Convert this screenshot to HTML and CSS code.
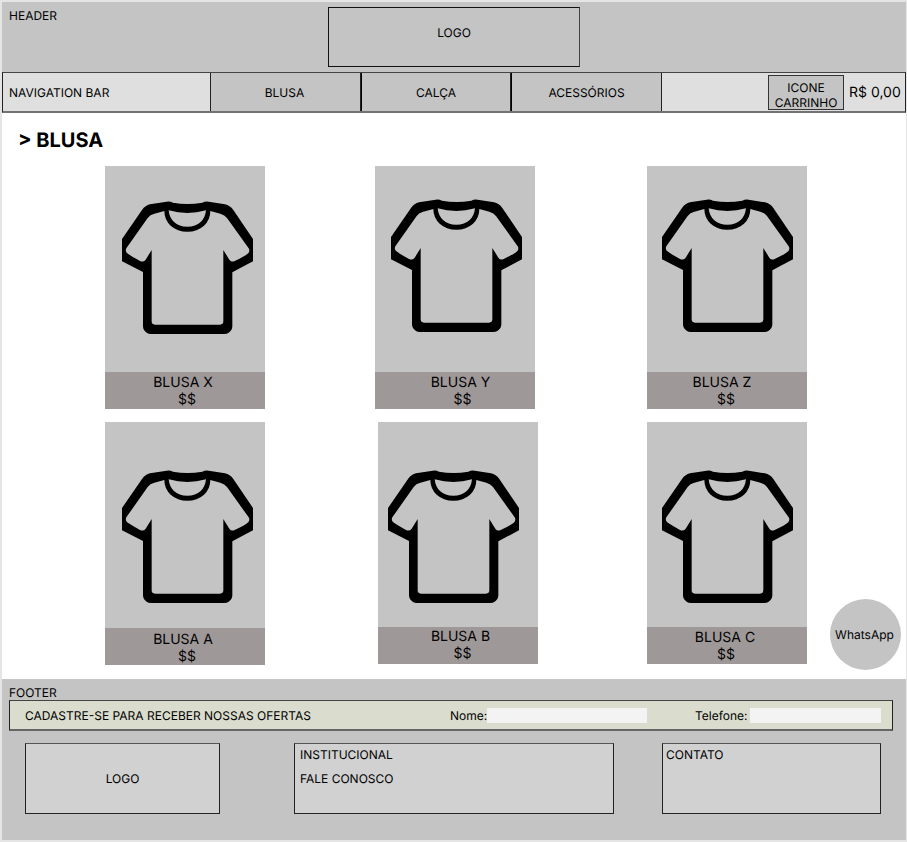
FILE: index.html
```html
<!DOCTYPE html>
<html lang="pt-BR">
<head>
<meta charset="utf-8">
<title>Blusa</title>
<link rel="stylesheet" href="styles.css">
</head>
<body>
<svg class="defs" width="0" height="0">
  <symbol id="shirt" viewBox="66 124 393 400">
    <path fill-rule="evenodd" d="M66 238L126 151Q136 137 150 134L200 126Q210 124 219 129Q262 137 307 129Q316 124 326 126L375 134Q390 137 400 151L459 238V305L397 338V500Q397 512 385 520Q381 523 372 523H153Q145 523 141 520Q129 512 129 500V337L66 305Z
    M193 154L163 162Q150 165 143 175L79 266Q76 272 79 278Q82 283 120 304Q130 309 137 300L155 271V485Q155 495 165 495H360Q370 495 370 485V271L388 300Q394 309 404 304Q440 287 446 279Q450 272 446 266L381 175Q374 166 361 162L331 154Q331 180 312 198Q292 216 262 216Q232 216 212 198Q193 180 193 154Z"/>
    <path class="neck" d="M206 152Q208 174 222 187Q237 201 262 201Q287 201 302 187Q316 174 318 152Q262 168 206 152Z"/>
  </symbol>
</svg>
<div class="page">
  <header class="header">
    <span class="header-label">HEADER</span>
    <div class="logo">LOGO</div>
  </header>
  <nav class="nav">
    <span class="nav-label">NAVIGATION BAR</span>
    <a class="tab">BLUSA</a>
    <a class="tab">CALÇA</a>
    <a class="tab">ACESSÓRIOS</a>
    <div class="cart"><span class="cart-icon">ICONE<br>CARRINHO</span><span class="price">R$ 0,00</span></div>
  </nav>
  <main class="main">
    <h1>&gt; BLUSA</h1>
    <div class="products">
      <article class="card x"><div class="photo"><svg><use href="#shirt"/></svg></div><div class="caption"><p>BLUSA X</p><p class="cost">$$</p></div></article>
      <article class="card y"><div class="photo"><svg><use href="#shirt"/></svg></div><div class="caption"><p>BLUSA Y</p><p class="cost">$$</p></div></article>
      <article class="card z"><div class="photo"><svg><use href="#shirt"/></svg></div><div class="caption"><p>BLUSA Z</p><p class="cost">$$</p></div></article>
      <article class="card a"><div class="photo"><svg><use href="#shirt"/></svg></div><div class="caption"><p>BLUSA A</p><p class="cost">$$</p></div></article>
      <article class="card b"><div class="photo"><svg><use href="#shirt"/></svg></div><div class="caption"><p>BLUSA B</p><p class="cost">$$</p></div></article>
      <article class="card c"><div class="photo"><svg><use href="#shirt"/></svg></div><div class="caption"><p>BLUSA C</p><p class="cost">$$</p></div></article>
    </div>
    <a class="whatsapp">WhatsApp</a>
  </main>
  <footer class="footer">
    <span class="footer-label">FOOTER</span>
    <form class="signup">
      <span class="offer">CADASTRE-SE PARA RECEBER NOSSAS OFERTAS</span>
      <label class="name">Nome:</label><span class="field field-name"></span>
      <label class="phone">Telefone:</label><span class="field field-phone"></span>
    </form>
    <div class="boxes">
      <div class="box box-logo">LOGO</div>
      <div class="box box-inst"><p>INSTITUCIONAL</p><p>FALE CONOSCO</p></div>
      <div class="box box-contact"><p>CONTATO</p></div>
    </div>
  </footer>
</div>
</body>
</html>
```
FILE: styles.css
```css
* { box-sizing: border-box; }
body { margin: 0; background: #e5e5e5; color: #000; font: 12px/15px Inter, sans-serif; text-rendering: geometricPrecision; }
p, h1 { margin: 0; }
.defs { display: block; height: 0; }
.neck { fill: #c4c4c4; }
.page { margin: 2px 1px 2px 2px; height: 838px; background: #fff; display: flex; flex-direction: column; }
.header { height: 70px; background: #c4c4c4; display: flex; align-items: flex-start; padding: 5px 0 0 7px; }
.header-label { width: 319px; margin-top: 1px; }
.logo { width: 252px; height: 60px; border: 1px solid #111; border-right-color: #444; text-align: center; padding-top: 17px; }
.nav { height: 41px; display: flex; background: #dfdfdf; border: 1px solid #222; border-top-color: #444; border-bottom: 2px solid #727272; line-height: 38px; }
.nav-label { width: 207px; padding-left: 6px; padding-top: 1px; }
.tab { width: 151px; padding: 1px 2px 0 0; background: #c4c4c4; border-left: 1px solid #222; border-right: 1px solid #222; text-align: center; }
.tab + .tab { border-left-color: #000; width: 150px; padding-right: 0; }
.tab:nth-of-type(3) { width: 151px; }
.cart { flex: 1; display: flex; padding-top: 2px; }
.cart-icon { width: 76px; height: 35px; margin-left: 106px; padding-top: 4px; background: #c4c4c4; border: 1px solid #333; line-height: 15px; text-align: center; white-space: nowrap; }
.price { margin-left: 5px; font-size: 14px; line-height: 35px; white-space: nowrap; }
.main { height: 566px; position: relative; padding-top: 15px; }
h1 { font-size: 20px; line-height: 24px; font-weight: 700; padding-left: 16px; }
.products { display: grid; grid-template-columns: 269.5px 272.5px 160px; grid-template-rows: 243px 243px; row-gap: 13px; margin: 14px 0 0 103px; }
.card { width: 160px; height: 243px; background: #c4c4c4; display: flex; flex-direction: column; }
.photo { flex: 1; padding: 35.4px 0 0 17px; }
.photo svg { display: block; width: 131px; height: 133.33px; }
.caption { height: 37px; background: #9f9898; font-size: 14px; line-height: 17px; text-align: center; padding-top: 2px; }
.x .caption, .a .caption { padding-right: 4px; }
.a .caption { padding-top: 3px; }
.cost { padding-left: 8px; }
.y .photo { padding: 33.4px 0 0 16.5px; }
.z .photo { padding: 33.4px 0 0 15px; }
.y .caption { padding-left: 12px; }
.y .cost, .b .cost { padding-left: 4px; }
.z .caption { padding-right: 10px; }
.a .photo { padding-top: 48px; }
.b, .c { height: 242px; }
.b { margin-left: 3px; }
.b .photo { padding: 48px 0 0 10.5px; }
.c .photo { padding: 48px 0 0 15px; }
.b .caption { padding: 1px 0 0 6px; }
.c .caption { padding-right: 4px; }
.c .cost { padding-left: 2px; }
.whatsapp { position: absolute; right: 5px; bottom: 9px; width: 71px; height: 71px; border-radius: 50%; background: #c4c4c4; line-height: 72px; text-align: center; padding-right: 2px; }
.footer { flex: 1; background: #c4c4c4; padding: 6px 13px 0 7px; }
.footer-label { display: block; height: 15px; }
.signup { width: 884px; height: 31px; display: flex; align-items: center; background: #dadccd; border: 1px solid #222; border-top-color: #444; border-bottom: 2px solid #666; padding-left: 15px; }
.offer { width: 425px; }
.name { width: 37px; }
.phone { width: 55px; margin-left: 48px; }
.field { height: 15px; background: #f3f3f3; }
.field-name { width: 160px; }
.field-phone { width: 131px; }
.boxes { display: flex; margin: 12px 0 0 16px; }
.box { height: 71px; background: #d1d1d1; border: 1px solid #222; border-top-color: #555; padding: 3px 5px; }
.box-logo { width: 195px; text-align: center; line-height: 63px; }
.box-inst { width: 320px; margin-left: 74px; }
.box-inst p + p { margin-top: 9px; }
.box-contact { width: 219px; margin-left: 48px; padding-left: 3px; }
```
